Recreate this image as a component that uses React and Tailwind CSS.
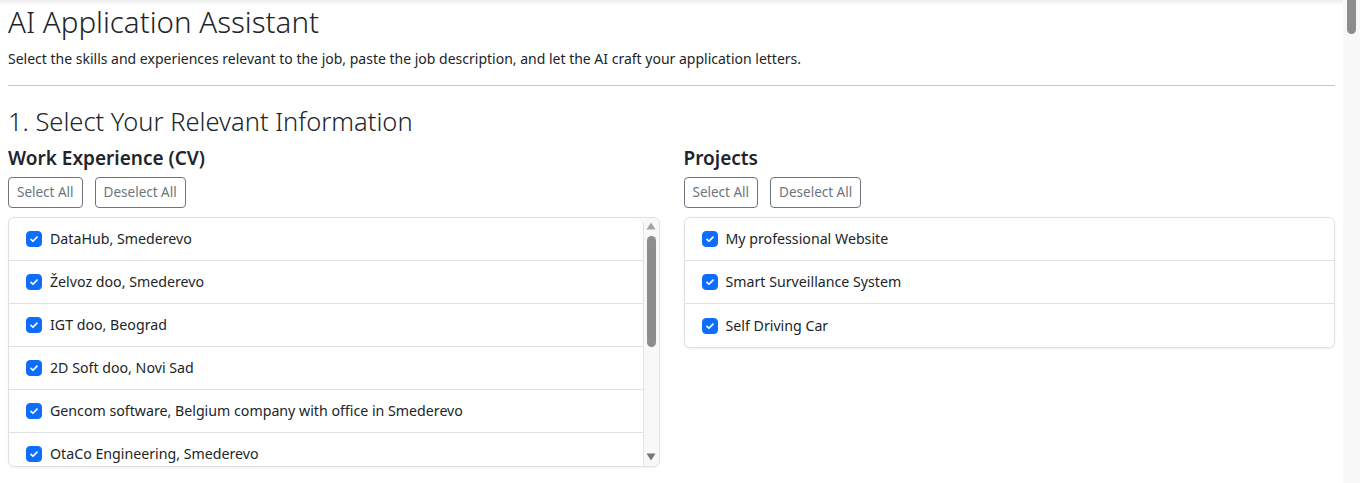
import React, { useState } from 'react';

const work = [
    'DataHub, Smederevo',
    'Želvoz doo, Smederevo',
    'IGT doo, Beograd',
    '2D Soft doo, Novi Sad',
    'Gencom software, Belgium company with office in Smederevo',
    'OtaCo Engineering, Smederevo',
];

const projects = ['My professional Website', 'Smart Surveillance System', 'Self Driving Car'];

const Check = ({ checked, onChange }) => (
    <button
        onClick={onChange}
        className={`w-4 h-4 rounded-[4px] flex items-center justify-center shrink-0 border ${checked ? 'bg-[#0d6efd] border-[#0d6efd]' : 'bg-white border-[#adb5bd]'}`}
    >
        {checked && (
            <svg viewBox="0 0 16 16" className="w-3 h-3">
                <path d="M4 8.4l2.6 2.6L12 5.5" fill="none" stroke="white" strokeWidth="2.2" strokeLinecap="round" strokeLinejoin="round" />
            </svg>
        )}
    </button>
);

// drawn scrollbar, the headless browser hides real ones
const ScrollBar = () => (
    <div className="w-[15px] shrink-0 bg-[#f8f8f8] flex flex-col items-center py-[3px]">
        <svg viewBox="0 0 10 8" className="w-[10px] h-[8px] mt-[1px]">
            <path d="M5 0.5L9.5 7.5H0.5z" fill="#a3a3a3" />
        </svg>
        <div className="w-[9px] h-[111px] mt-[6px] rounded-full bg-[#8d8d8d]" />
        <div className="flex-1" />
        <svg viewBox="0 0 10 8" className="w-[10px] h-[8px] mb-[2px]">
            <path d="M0.5 0.5h9L5 7.5z" fill="#777" />
        </svg>
    </div>
);

const Row = ({ label, checked, onToggle, last }) => (
    <label
        className={`flex items-center gap-2 h-[43px] px-[17px] text-[14.2px] text-[#212529] cursor-pointer ${last ? '' : 'border-b border-[#dee2e6]'}`}
    >
        <Check checked={checked} onChange={onToggle} />
        <span>{label}</span>
    </label>
);

const Section = ({ title, items, scroll }) => {
    const [sel, setSel] = useState(items.map(() => true));
    const toggle = (i) => setSel(sel.map((v, j) => (j === i ? !v : v)));

    const rows = items.map((it, i) => (
        <Row key={it} label={it} checked={sel[i]} onToggle={() => toggle(i)} last={!scroll && i === items.length - 1} />
    ));

    return (
        <div>
            <h4 className="text-[19px] font-semibold text-[#212529] leading-[24px] mt-[6px]">{title}</h4>
            <div className="flex gap-3 mt-[7px]">
                <button
                    onClick={() => setSel(items.map(() => true))}
                    className="h-[31px] px-[8px] text-[13.5px] text-[#6c757d] border border-[#6c757d] rounded-[4px]"
                >
                    Select All
                </button>
                <button
                    onClick={() => setSel(items.map(() => false))}
                    className="h-[31px] px-[8px] text-[13.5px] text-[#6c757d] border border-[#6c757d] rounded-[4px]"
                >
                    Deselect All
                </button>
            </div>
            {scroll ? (
                <div className="mt-[9px] h-[250px] flex border border-[#e0e0e0] rounded-[6px] overflow-hidden shadow-[0_1px_2px_rgba(0,0,0,0.06)]">
                    <div className="flex-1 overflow-hidden border-r border-[#e3e3e3] rounded-tr-[6px]">{rows}</div>
                    <ScrollBar />
                </div>
            ) : (
                <div className="mt-[9px] border border-[#dee2e6] rounded-[6px] shadow-[0_1px_2px_rgba(0,0,0,0.08)]">{rows}</div>
            )}
        </div>
    );
};

export default function App() {
    return (
        <div className="h-screen flex bg-white font-['Segoe_UI','Noto_Sans',sans-serif] text-[#212529]">
            <div className="flex-1 overflow-hidden">
                <div className="h-[5px] bg-gradient-to-b from-[#ececec] to-white" />
                <div className="px-2">
                    <h1 className="text-[29.5px] font-light leading-[38px] -mt-[2px]">AI Application Assistant</h1>
                    <p className="text-[14px] mt-[7px] leading-[21px]">
                        Select the skills and experiences relevant to the job, paste the job description, and let the AI craft your application letters.
                    </p>
                    <hr className="mt-[16px] border-t border-[#c8c8c8]" />
                    <h2 className="text-[25.5px] font-light leading-[34px] mt-[18px]">1. Select Your Relevant Information</h2>
                    <div className="grid grid-cols-2 gap-6 mt-[2px]">
                        <Section title="Work Experience (CV)" items={work} scroll />
                        <Section title="Projects" items={projects} />
                    </div>
                </div>
            </div>
            <div className="w-[17px] shrink-0 bg-[#f8f8f8] flex justify-center">
                <div className="w-[9px] h-[34px] rounded-b-full bg-[#8d8d8d]" />
            </div>
        </div>
    );
}
